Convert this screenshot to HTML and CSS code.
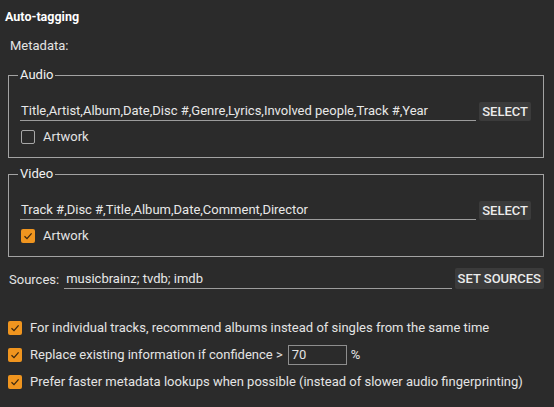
FILE: index.html
```html
<!DOCTYPE html>
<html>
<head>
<meta charset="utf-8">
<link rel="stylesheet" href="styles.css">
</head>
<body>
<div class="page">
  <div class="title">Auto-tagging</div>
  <div class="label">Metadata:</div>

  <fieldset class="group">
    <legend>Audio</legend>
    <div class="row">
      <div class="field">Title,Artist,Album,Date,Disc #,Genre,Lyrics,Involved people,Track #,Year</div>
      <button class="btn">SELECT</button>
    </div>
    <label class="check">
      <span class="box"></span>
      <span>Artwork</span>
    </label>
  </fieldset>

  <fieldset class="group">
    <legend>Video</legend>
    <div class="row">
      <div class="field">Track #,Disc #,Title,Album,Date,Comment,Director</div>
      <button class="btn">SELECT</button>
    </div>
    <label class="check">
      <span class="box on"><svg viewBox="0 0 14 14" width="14" height="14"><path d="M3.5 7.2 L6 9.6 L10.6 4.4" fill="none" stroke="#3b2710" stroke-width="1.3"/></svg></span>
      <span>Artwork</span>
    </label>
  </fieldset>

  <div class="sources">
    <span class="src-label">Sources:</span>
    <div class="field src-field">musicbrainz; tvdb; imdb</div>
    <button class="btn">SET SOURCES</button>
  </div>

  <div class="options">
    <label class="opt">
      <span class="box on"><svg viewBox="0 0 14 14" width="14" height="14"><path d="M3.5 7.2 L6 9.6 L10.6 4.4" fill="none" stroke="#3b2710" stroke-width="1.3"/></svg></span>
      <span>For individual tracks, recommend albums instead of singles from the same time</span>
    </label>
    <label class="opt">
      <span class="box on"><svg viewBox="0 0 14 14" width="14" height="14"><path d="M3.5 7.2 L6 9.6 L10.6 4.4" fill="none" stroke="#3b2710" stroke-width="1.3"/></svg></span>
      <span>Replace existing information if confidence &gt;</span>
      <span class="num">70</span>
      <span>%</span>
    </label>
    <label class="opt">
      <span class="box on"><svg viewBox="0 0 14 14" width="14" height="14"><path d="M3.5 7.2 L6 9.6 L10.6 4.4" fill="none" stroke="#3b2710" stroke-width="1.3"/></svg></span>
      <span>Prefer faster metadata lookups when possible (instead of slower audio fingerprinting)</span>
    </label>
  </div>
</div>
</body>
</html>
```

FILE: styles.css
```css
html, body {
  margin: 0;
  padding: 0;
  background: #2b2b2b;
}
body {
  font-family: Roboto, "Liberation Sans", sans-serif;
  font-size: 13px;
  color: #e4e4e4;
  width: 554px;
  height: 407px;
  overflow: hidden;
}
.page {
  padding: 9px 0 0 0;
}
.title {
  font-weight: bold;
  font-size: 12.5px;
  color: #ffffff;
  line-height: 16px;
  margin-left: 5px;
}
.label {
  line-height: 16px;
  margin: 13px 0 0 10px;
}
.group {
  margin: 13px 10px 0 8px;
  padding: 0 12px 13px 11px;
  border: 1px solid #a3a3a3;
  min-width: 0;
}
.group + .group {
  margin-top: 8px;
}
.group legend {
  padding: 0 2px;
  margin-left: -2px;
  line-height: 16px;
  color: #f2f2f2;
}
.row {
  display: flex;
  align-items: center;
  margin-top: 18px;
}
.field {
  flex: 1;
  height: 19px;
  line-height: 19px;
  border-bottom: 1px solid #9c9c9c;
  padding-left: 1px;
  white-space: nowrap;
  overflow: hidden;
  color: #e8e8e8;
}
.btn {
  margin-left: 3px;
  height: 19px;
  padding: 0 3px;
  background: #3b3b3b;
  border: none;
  border-radius: 2px;
  color: #ececec;
  font-family: Roboto, "Liberation Sans", sans-serif;
  font-size: 13px;
  font-weight: 500;
}
.check {
  display: flex;
  align-items: center;
  gap: 8px;
  margin-top: 9px;
  margin-left: 1px;
  line-height: 14px;
}
.box {
  width: 14px;
  height: 14px;
  box-sizing: border-box;
  border: 1px solid #a8a8a8;
  border-radius: 2px;
  flex: none;
  display: block;
}
.box svg {
  display: block;
}
.box.on {
  background: #f0951f;
  border: none;
}
.sources {
  display: flex;
  align-items: center;
  margin: 11px 10px 0 9px;
}
.src-label {
  margin-right: 5px;
  margin-top: 1px;
}
.src-field {
  flex: 1;
  height: 19px;
  line-height: 19px;
  padding-left: 2px;
}
.sources .btn {
  height: 21px;
  padding: 0 3px;
}
.options {
  margin: 32px 0 0 8px;
  display: flex;
  flex-direction: column;
  gap: 13px;
}
.opt {
  display: flex;
  align-items: center;
  gap: 8px;
  height: 14px;
  line-height: 14px;
}
.num {
  box-sizing: border-box;
  width: 59px;
  height: 20px;
  line-height: 18px;
  border: 1px solid #8e8e8e;
  padding-left: 3px;
  margin-left: -3px;
  margin-right: -4px;
}
```
